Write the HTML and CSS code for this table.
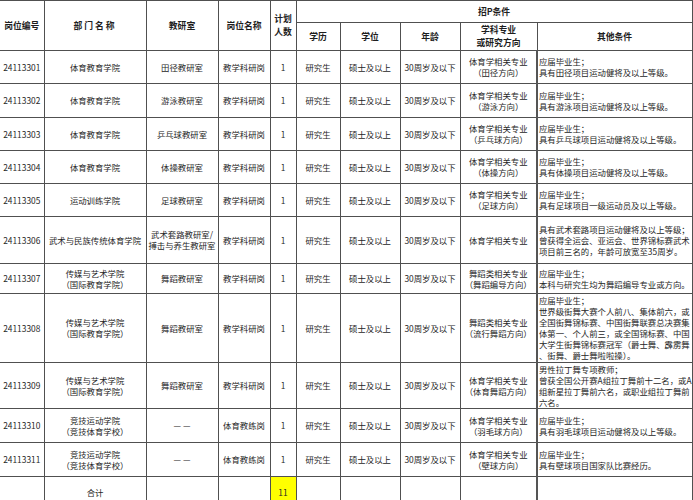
FILE: index.html
```html
<!DOCTYPE html>
<html lang="zh">
<head>
<meta charset="utf-8">
<title>招聘岗位表</title>
<link rel="stylesheet" href="styles.css">
</head>
<body>
<table class="sheet">
  <colgroup>
    <col class="c-id"><col class="c-dept"><col class="c-room"><col class="c-post"><col class="c-num">
    <col class="c-edu"><col class="c-deg"><col class="c-age"><col class="c-major"><col class="c-other">
  </colgroup>
  <thead>
    <tr class="h1">
      <th rowspan="2" class="first">岗位编号</th>
      <th rowspan="2" class="wide">部门名称</th>
      <th rowspan="2">教研室</th>
      <th rowspan="2">岗位名称</th>
      <th rowspan="2" class="two">计划<br>人数</th>
      <th colspan="5">招P条件</th>
    </tr>
    <tr class="h2">
      <th>学历</th>
      <th>学位</th>
      <th>年龄</th>
      <th class="two">学科专业<br>或研究方向</th>
      <th>其他条件</th>
    </tr>
  </thead>
  <tbody>
    <tr class="r33">
      <td class="first">24113301</td><td>体育教育学院</td><td>田径教研室</td><td>教学科研岗</td><td>1</td>
      <td>研究生</td><td>硕士及以上</td><td>30周岁及以下</td><td>体育学相关专业<br>（田径方向）</td>
      <td class="other">应届毕业生；<br>具有田径项目运动健将及以上等级。</td>
    </tr>
    <tr class="r34">
      <td class="first">24113302</td><td>体育教育学院</td><td>游泳教研室</td><td>教学科研岗</td><td>1</td>
      <td>研究生</td><td>硕士及以上</td><td>30周岁及以下</td><td>体育学相关专业<br>（游泳方向）</td>
      <td class="other">应届毕业生；<br>具有游泳项目运动健将及以上等级。</td>
    </tr>
    <tr class="r33">
      <td class="first">24113303</td><td>体育教育学院</td><td>乒乓球教研室</td><td>教学科研岗</td><td>1</td>
      <td>研究生</td><td>硕士及以上</td><td>30周岁及以下</td><td>体育学相关专业<br>（乒乓球方向）</td>
      <td class="other">应届毕业生；<br>具有乒乓球项目运动健将及以上等级。</td>
    </tr>
    <tr class="r33">
      <td class="first">24113304</td><td>体育教育学院</td><td>体操教研室</td><td>教学科研岗</td><td>1</td>
      <td>研究生</td><td>硕士及以上</td><td>30周岁及以下</td><td>体育学相关专业<br>（体操方向）</td>
      <td class="other">应届毕业生；<br>具有体操项目运动健将及以上等级。</td>
    </tr>
    <tr class="r33">
      <td class="first">24113305</td><td>运动训练学院</td><td>足球教研室</td><td>教学科研岗</td><td>1</td>
      <td>研究生</td><td>硕士及以上</td><td>30周岁及以下</td><td>体育学相关专业<br>（足球方向）</td>
      <td class="other">应届毕业生；<br>具有足球项目一级运动员及以上等级。</td>
    </tr>
    <tr class="r47">
      <td class="first">24113306</td><td>武术与民族传统体育学院</td><td>武术套路教研室/<br>搏击与养生教研室</td><td>教学科研岗</td><td>1</td>
      <td>研究生</td><td>硕士及以上</td><td>30周岁及以下</td><td>体育学相关专业</td>
      <td class="other">具有武术套路项目运动健将及以上等级；<br>曾获得全运会、亚运会、世界锦标赛武术<br>项目前三名的，年龄可放宽至35周岁。</td>
    </tr>
    <tr class="r30">
      <td class="first">24113307</td><td>传媒与艺术学院<br>（国际教育学院）</td><td>舞蹈教研室</td><td>教学科研岗</td><td>1</td>
      <td>研究生</td><td>硕士及以上</td><td>30周岁及以下</td><td>舞蹈类相关专业<br>（舞蹈编导方向）</td>
      <td class="other">应届毕业生；<br>本科与研究生均为舞蹈编导专业或方向。</td>
    </tr>
    <tr class="r69">
      <td class="first">24113308</td><td>传媒与艺术学院<br>（国际教育学院）</td><td>舞蹈教研室</td><td>教学科研岗</td><td>1</td>
      <td>研究生</td><td>硕士及以上</td><td>30周岁及以下</td><td>舞蹈类相关专业<br>（流行舞蹈方向）</td>
      <td class="other">应届毕业生；<br>世界级街舞大赛个人前八、集体前六，或<br>全国街舞锦标赛、中国街舞联赛总决赛集<br>体第一、个人前三，或全国锦标赛、中国<br>大学生街舞锦标赛冠军（爵士舞、霹雳舞<br>、街舞、爵士舞啦啦操）。</td>
    </tr>
    <tr class="r46">
      <td class="first">24113309</td><td>传媒与艺术学院<br>（国际教育学院）</td><td>舞蹈教研室</td><td>教学科研岗</td><td>1</td>
      <td>研究生</td><td>硕士及以上</td><td>30周岁及以下</td><td>体育学相关专业<br>（体育舞蹈方向）</td>
      <td class="other">男性拉丁舞专项教师；<br>曾获全国公开赛A组拉丁舞前十二名，或A<br>组新星拉丁舞前六名，或职业组拉丁舞前<br>六名。</td>
    </tr>
    <tr class="r34">
      <td class="first">24113310</td><td>竞技运动学院<br>（竞技体育学校）</td><td>— —</td><td>体育教练岗</td><td>1</td>
      <td>研究生</td><td>硕士及以上</td><td>30周岁及以下</td><td>体育学相关专业<br>（羽毛球方向）</td>
      <td class="other">应届毕业生；<br>具有羽毛球项目运动健将及以上等级。</td>
    </tr>
    <tr class="r34">
      <td class="first">24113311</td><td>竞技运动学院<br>（竞技体育学校）</td><td>— —</td><td>体育教练岗</td><td>1</td>
      <td>研究生</td><td>硕士及以上</td><td>30周岁及以下</td><td>体育学相关专业<br>（壁球方向）</td>
      <td class="other">应届毕业生；<br>具有壁球项目国家队比赛经历。</td>
    </tr>
    <tr class="total">
      <td class="first"></td><td>合计</td><td></td><td></td><td class="hl">11</td>
      <td></td><td></td><td></td><td></td><td class="other"></td>
    </tr>
  </tbody>
</table>
</body>
</html>
```
FILE: styles.css
```css
html, body {
  margin: 0;
  padding: 0;
  background: #ffffff;
}

body {
  font-family: "Noto Sans CJK SC", "Noto Sans", sans-serif;
  font-size: 8.4px;
  color: #262626;
}

.sheet {
  border-collapse: collapse;
  table-layout: fixed;
  width: 692px;
}

.c-id { width: 44px; }
.c-dept { width: 102px; }
.c-room { width: 72px; }
.c-post { width: 52px; }
.c-num { width: 26px; }
.c-edu { width: 44px; }
.c-deg { width: 60px; }
.c-age { width: 60px; }
.c-major { width: 77px; }
.c-other { width: 155px; }

.sheet th,
.sheet td {
  border: 1px solid #505050;
  padding: 0 1px;
  text-align: center;
  vertical-align: middle;
  line-height: 11px;
  white-space: nowrap;
  overflow: hidden;
}

.sheet th {
  font-weight: 700;
  font-size: 8.8px;
  color: #1e1e1e;
}

.sheet th.two {
  line-height: 12.5px;
}

.sheet .first {
  border-left: none;
}

.sheet th.wide {
  letter-spacing: 2px;
}

.h1 { height: 22px; }
.h2 { height: 28px; }

.r30 { height: 30px; }
.r33 { height: 33px; }
.r34 { height: 34px; }
.r46 { height: 46px; }
.r47 { height: 47px; }
.r69 { height: 69px; }
.total { height: 32px; }

.sheet td.other {
  text-align: left;
  padding-left: 1px;
  border-left: 2px solid #555555;
}

.sheet td.hl {
  background: #ffff00;
}
```
